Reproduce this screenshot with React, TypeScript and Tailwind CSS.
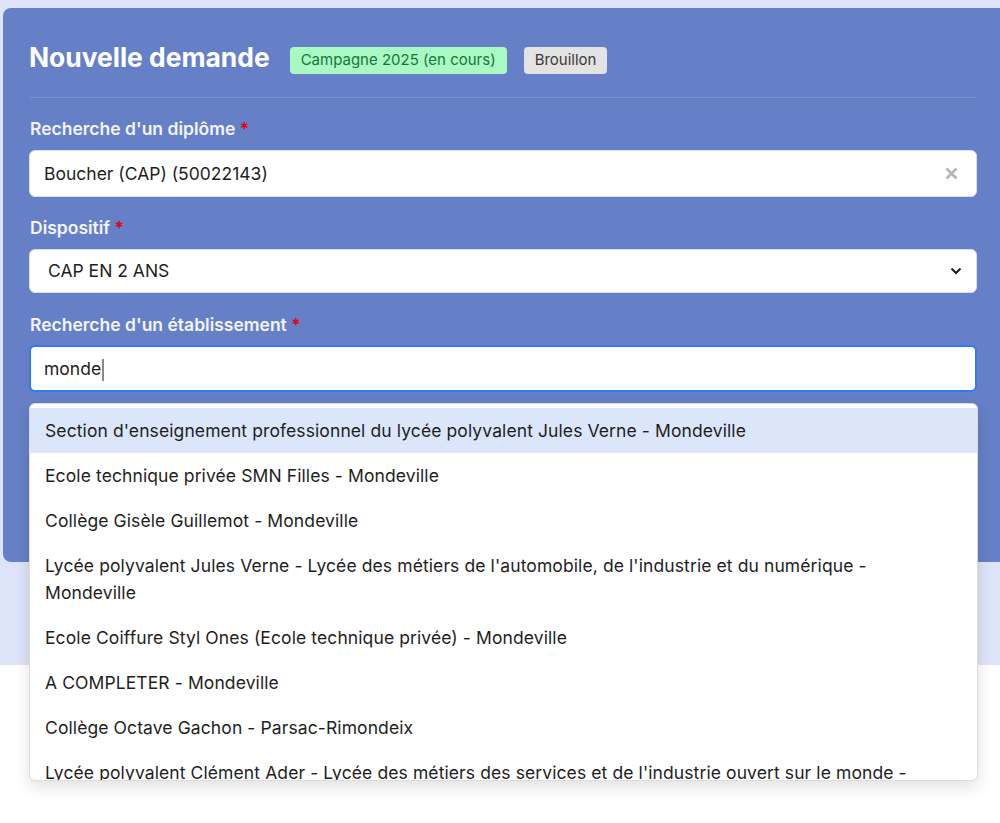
import React from "react";

const items = [
  "Section d'enseignement professionnel du lycée polyvalent Jules Verne - Mondeville",
  "Ecole technique privée SMN Filles - Mondeville",
  "Collège Gisèle Guillemot - Mondeville",
  "Lycée polyvalent Jules Verne - Lycée des métiers de l'automobile, de l'industrie et du numérique - Mondeville",
  "Ecole Coiffure Styl Ones (Ecole technique privée) - Mondeville",
  "A COMPLETER - Mondeville",
  "Collège Octave Gachon - Parsac-Rimondeix",
  "Lycée polyvalent Clément Ader - Lycée des métiers des services et de l'industrie ouvert sur le monde - Tournan-en-Brie",
];

function Label({ text }: { text: string }) {
  return (
    <div className="text-[17.5px] leading-[24px] font-semibold text-[#f3f4fd]">
      {text} <span className="text-[#e1000f]">*</span>
    </div>
  );
}

export default function App() {
  return (
    <div className="h-[823px] overflow-hidden bg-white font-['Inter',sans-serif] text-[#1e1e1e]">
      <div className="h-[665px] bg-[#dde3f8] pl-[3px] pt-[8px]">
        <div className="relative h-[554px] w-[1010px] rounded-l-[8px] bg-[#6680c7] pl-[26px] pr-[36px] pt-[31px]">
          <div className="flex items-center">
            <h1 className="text-[26.4px] leading-[36px] font-bold text-white">Nouvelle demande</h1>
            <span className="ml-[20px] mt-[7px] flex h-[27px] items-center rounded-[4px] bg-[#a9f9c2] px-[11px] text-[15px] text-[#18753c]">
              Campagne 2025 (en cours)
            </span>
            <span className="ml-[17px] mt-[7px] flex h-[27px] items-center rounded-[4px] bg-[#e3e3e3] px-[11px] text-[15px] text-[#3a3a3a]">
              Brouillon
            </span>
          </div>
          <div className="ml-[1px] mt-[22px] h-px w-[947px] bg-[#7a91d0]" />

          <div className="ml-[1px] mt-[19px]">
            <Label text="Recherche d'un diplôme" />
          </div>
          <div className="mt-[9px] flex h-[47px] w-[948px] items-center justify-between rounded-[6px] border border-[#d9ddea] bg-white pl-[14px] pr-[18px] text-[17.5px]">
            <span className="mt-[2px]">Boucher (CAP) (50022143)</span>
            <svg width="13" height="13" viewBox="0 0 13 13" className="text-[#b5b5b5]">
              <path d="M1.5 1.5 L11.5 11.5 M11.5 1.5 L1.5 11.5" stroke="currentColor" strokeWidth="2.6" strokeLinecap="butt" />
            </svg>
          </div>

          <div className="ml-[1px] mt-[19px]">
            <Label text="Dispositif" />
          </div>
          <div className="mt-[9px] flex h-[44px] w-[948px] items-center justify-between rounded-[6px] border border-[#d9ddea] bg-white pl-[18px] pr-[14px] text-[17.5px]">
            <span className="mt-[1px]">CAP EN 2 ANS</span>
            <svg width="12" height="8" viewBox="0 0 12 8" className="text-[#1e1e1e]">
              <path d="M1.5 1.5 L6 6 L10.5 1.5" fill="none" stroke="currentColor" strokeWidth="2" />
            </svg>
          </div>

          <div className="ml-[1px] mt-[20px]">
            <Label text="Recherche d'un établissement" />
          </div>
          <div className="relative mt-[8px] w-[948px]">
            <div className="flex h-[47px] items-center rounded-[6px] border-2 border-[#2f7bf5] bg-white pl-[13px] text-[17.5px]">
              <span className="mt-[2px]">monde</span>
              <span className="ml-px mt-[2px] h-[22px] w-[2px] bg-[#8a8a8a]" />
            </div>
            <div className="absolute left-0 top-[58px] z-10 h-[378px] w-[949px] overflow-hidden rounded-[6px] border border-[#dcdcdc] bg-white py-[4px] shadow-[0_6px_16px_rgba(0,0,0,0.12)]">
              {items.map((t, i) => (
                <div
                  key={i}
                  className={`py-[9px] pl-[15px] pr-[16px] text-[17.5px] leading-[27px] tracking-[0.1px] text-[#1e1e1e] ${
                    i === 0 ? "bg-[#dbe6fb]" : ""
                  }`}
                >
                  {t}
                </div>
              ))}
            </div>
          </div>
        </div>
      </div>
    </div>
  );
}
